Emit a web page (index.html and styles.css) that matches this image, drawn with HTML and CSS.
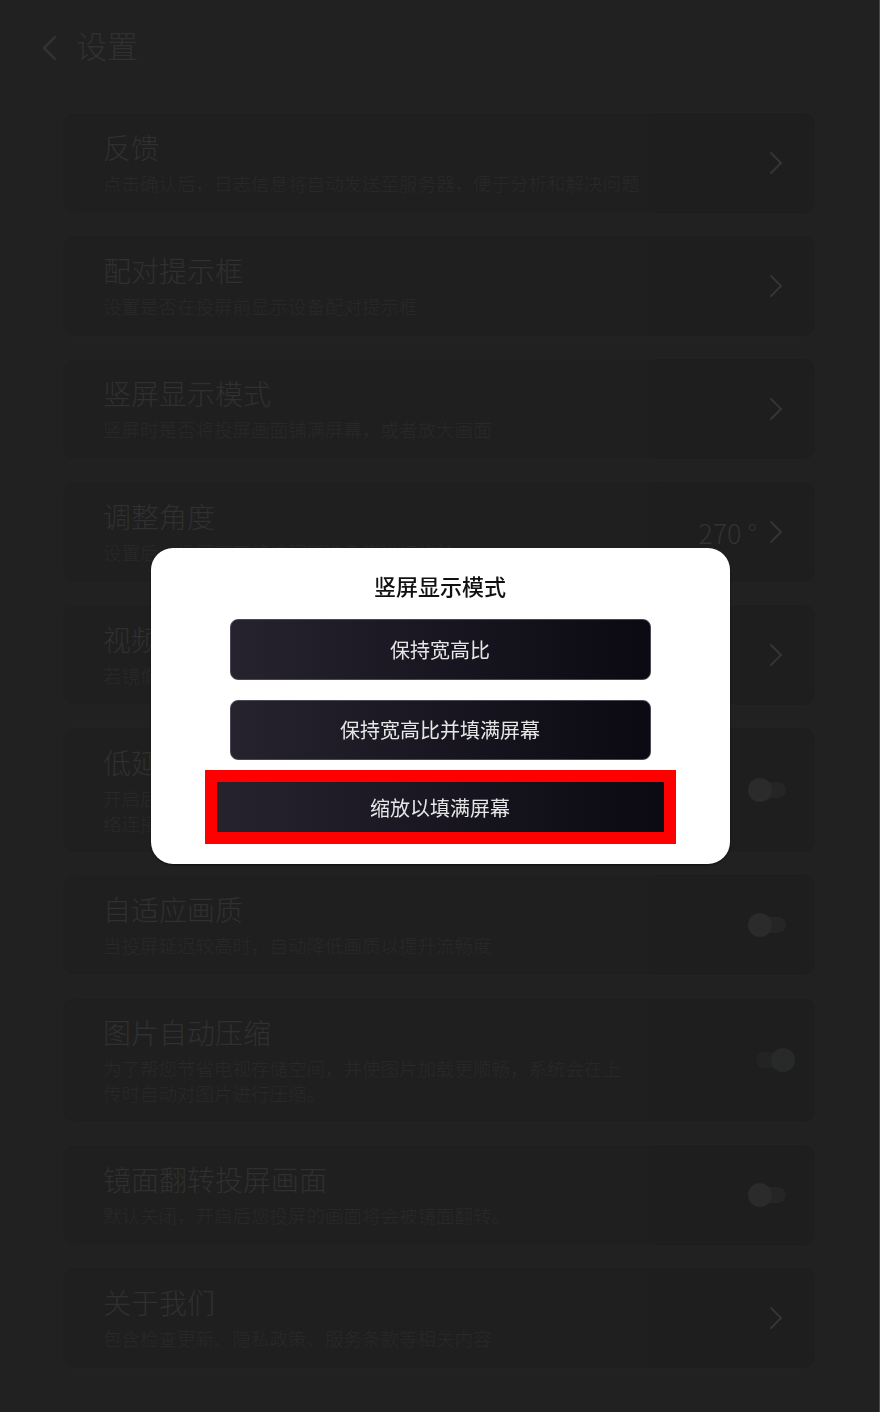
FILE: index.html
```
<!DOCTYPE html>
<html lang="zh-CN">

<head>
    <meta charset="UTF-8">
    <meta name="viewport" content="width=device-width, initial-scale=1.0">
    <title>设置</title>
    <link rel="stylesheet" href="styles.css">
</head>

<body>
    <div class="page">
        <div class="header">
            <svg class="back" width="18" height="26" viewBox="0 0 18 26">
                <polyline points="15,2 4,13 15,24" fill="none" stroke="#323232" stroke-width="2.6" stroke-linecap="round" stroke-linejoin="round" />
            </svg>
            <span class="header-title">设置</span>
        </div>

        <ul class="list">
            <li class="card">
                <div class="info">
                    <p class="title">反馈</p>
                    <p class="desc">点击确认后，日志信息将自动发送至服务器，便于分析和解决问题</p>
                </div>
                <div class="side">
                    <svg class="arrow" width="14" height="24" viewBox="0 0 14 24"><polyline points="2,2 12,12 2,22" fill="none" stroke="#353535" stroke-width="2" stroke-linecap="round" /></svg>
                </div>
            </li>
            <li class="card">
                <div class="info">
                    <p class="title">配对提示框</p>
                    <p class="desc">设置是否在投屏前显示设备配对提示框</p>
                </div>
                <div class="side">
                    <svg class="arrow" width="14" height="24" viewBox="0 0 14 24"><polyline points="2,2 12,12 2,22" fill="none" stroke="#353535" stroke-width="2" stroke-linecap="round" /></svg>
                </div>
            </li>
            <li class="card">
                <div class="info">
                    <p class="title">竖屏显示模式</p>
                    <p class="desc">竖屏时是否将投屏画面铺满屏幕，或者放大画面</p>
                </div>
                <div class="side">
                    <svg class="arrow" width="14" height="24" viewBox="0 0 14 24"><polyline points="2,2 12,12 2,22" fill="none" stroke="#353535" stroke-width="2" stroke-linecap="round" /></svg>
                </div>
            </li>
            <li class="card">
                <div class="info">
                    <p class="title">调整角度</p>
                    <p class="desc">设置后，投屏画面将按照所选角度进行旋转</p>
                </div>
                <div class="side">
                    <span class="value">270 °</span>
                    <svg class="arrow" width="14" height="24" viewBox="0 0 14 24"><polyline points="2,2 12,12 2,22" fill="none" stroke="#353535" stroke-width="2" stroke-linecap="round" /></svg>
                </div>
            </li>
            <li class="card">
                <div class="info">
                    <p class="title">视频解码模式</p>
                    <p class="desc">若镜像画面出现卡顿或花屏，可尝试切换解码模式</p>
                </div>
                <div class="side">
                    <svg class="arrow" width="14" height="24" viewBox="0 0 14 24"><polyline points="2,2 12,12 2,22" fill="none" stroke="#353535" stroke-width="2" stroke-linecap="round" /></svg>
                </div>
            </li>
            <li class="card">
                <div class="info">
                    <p class="title">低延迟模式</p>
                    <p class="desc">开启后将优先保证画面实时性，降低投屏延迟，需保持稳定的网<br>络连接，画质可能会有所下降</p>
                </div>
                <div class="side">
                    <span class="switch"></span>
                </div>
            </li>
            <li class="card">
                <div class="info">
                    <p class="title">自适应画质</p>
                    <p class="desc">当投屏延迟较高时，自动降低画质以提升流畅度</p>
                </div>
                <div class="side">
                    <span class="switch"></span>
                </div>
            </li>
            <li class="card">
                <div class="info">
                    <p class="title">图片自动压缩</p>
                    <p class="desc">为了帮您节省电视存储空间，并使图片加载更顺畅，系统会在上<br>传时自动对图片进行压缩。</p>
                </div>
                <div class="side">
                    <span class="switch on"></span>
                </div>
            </li>
            <li class="card">
                <div class="info">
                    <p class="title">镜面翻转投屏画面</p>
                    <p class="desc">默认关闭，开启后您投屏的画面将会被镜面翻转。</p>
                </div>
                <div class="side">
                    <span class="switch"></span>
                </div>
            </li>
            <li class="card">
                <div class="info">
                    <p class="title">关于我们</p>
                    <p class="desc">包含检查更新、隐私政策、服务条款等相关内容</p>
                </div>
                <div class="side">
                    <svg class="arrow" width="14" height="24" viewBox="0 0 14 24"><polyline points="2,2 12,12 2,22" fill="none" stroke="#353535" stroke-width="2" stroke-linecap="round" /></svg>
                </div>
            </li>
        </ul>
    </div>

    <!-- 弹窗 -->
    <div class="mask">
        <div class="dialog">
            <p class="dialog-title">竖屏显示模式</p>
            <div class="btn">保持宽高比</div>
            <div class="btn">保持宽高比并填满屏幕</div>
            <div class="btn focused">缩放以填满屏幕</div>
        </div>
    </div>
</body>

</html>
```

FILE: styles.css
```
/*
    基本样式
*/
body,
div,
ul,
li,
p,
span {
    margin: 0px;
    padding: 0px;
}

ul,
li {
    list-style: none;
}

body {
    background-color: #212121;
    font-family: "Noto Sans CJK SC", "Noto Sans", sans-serif;
}

.page {
    min-height: 100vh;
    padding-bottom: 40px;
    box-sizing: border-box;
    border-right: 1px solid #4a4a4a;
}

/*
    顶部
*/
.header {
    display: flex;
    align-items: center;
    height: 40px;
    padding: 25px 0 0 40px;
}

.header .back {
    margin-top: 6px;
}

.header-title {
    margin-left: 18px;
    font-size: 31px;
    line-height: 40px;
    color: #303030;
    font-weight: 300;
}

/*
    列表
*/
.list {
    display: flex;
    flex-direction: column;
    gap: 23px;
    margin-top: 48px;
    padding: 0 64px 0 63px;
}

.card {
    display: flex;
    min-height: 100px;
    border-radius: 12px;
    background-color: #1f1f1f;
    box-shadow: 0 0 0 1px rgba(255, 255, 255, 0.008);
}

.card .info {
    flex: 1;
    padding: 16px 0 16px 40px;
}

.card .title {
    font-size: 28px;
    line-height: 36px;
    color: #303030;
    font-weight: 300;
}

.card .desc {
    width: 545px;
    margin-top: 6px;
    font-size: 18.5px;
    line-height: 25px;
    color: #292929;
    font-weight: 300;
}

.card .side {
    display: flex;
    align-items: center;
    justify-content: flex-end;
    width: 180px;
    padding-right: 32px;
    box-sizing: border-box;
    border-radius: 12px;
    background-color: #1e1e1e;
}

.card .value {
    margin-right: 12px;
    font-size: 27px;
    color: #323232;
    font-weight: 300;
}

/*
    开关
*/
.switch {
    position: relative;
    display: block;
    width: 30px;
    height: 16px;
    margin-right: -3px;
    border-radius: 8px;
    background-color: #252525;
}

.switch::after {
    position: absolute;
    top: -4px;
    left: -8px;
    width: 24px;
    height: 24px;
    border-radius: 50%;
    background-color: #2b2b2b;
    content: "";
}

.switch.on {
    background-color: #222322;
}

.switch.on::after {
    left: 15px;
    background-color: #272a28;
}

/*
    弹窗
*/
.mask {
    position: fixed;
    top: 0;
    left: 0;
    right: 0;
    bottom: 0;
    display: flex;
    align-items: center;
    justify-content: center;
}

.dialog {
    display: flex;
    flex-direction: column;
    align-items: center;
    width: 579px;
    height: 316px;
    box-sizing: border-box;
    padding-top: 22px;
    border-radius: 22px;
    background-color: #fff;
    box-shadow: 0 1px 2px rgba(0, 0, 0, 0.6);
}

.dialog-title {
    height: 30px;
    margin-bottom: 19px;
    font-size: 22px;
    line-height: 30px;
    color: #111;
    font-weight: 500;
}

.btn {
    display: flex;
    align-items: center;
    justify-content: center;
    width: 421px;
    height: 61px;
    margin-bottom: 20px;
    box-sizing: border-box;
    border: 1px solid #4a4852;
    border-radius: 8px;
    background-image: linear-gradient(to right, #26232f, #0b0912);
    font-size: 20px;
    color: #e6e6e6;
}

.btn.focused {
    width: 471px;
    height: 74px;
    margin-top: -10px;
    border: 12px solid #ff0000;
    border-radius: 0;
}
```
